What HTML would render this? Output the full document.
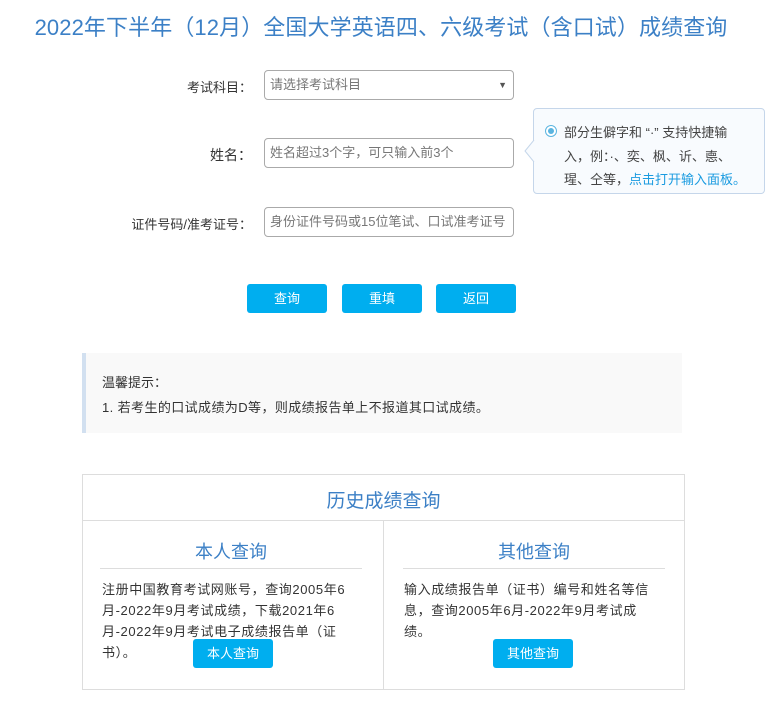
<!DOCTYPE html>
<html><head><meta charset="utf-8"><style>
body{margin:0;width:778px;height:708px;background:#fff;font-family:"Liberation Sans","Noto Sans CJK SC",sans-serif;color:#333;position:relative;overflow:hidden}
.a{position:absolute}
.t{left:0;width:762px;top:10px;text-align:center;font-size:22px;color:#3c80c6;white-space:nowrap;letter-spacing:0.1px}
.lab{width:160px;left:92px;text-align:right;font-size:13px;color:#333}
.inp{left:264px;height:28px;border:1px solid #aaa;border-radius:4px;font-size:13px;color:#777;line-height:28px;padding-left:5px;box-sizing:border-box;width:250px;height:30px;white-space:nowrap;overflow:hidden}
.btn{background:#00aeef;color:#fff;font-size:13px;text-align:center;border-radius:3px;line-height:29px;height:29px;width:80px}
.tip{left:533px;top:108px;width:232px;height:86px;border:1px solid #c5d6ea;border-radius:4px;background:#f8fbfe;box-sizing:border-box;font-size:13px;line-height:23.5px;color:#444;padding:12px 0 0 30px;white-space:nowrap}
.hbox{left:82px;top:474px;width:603px;height:216px;border:1px solid #ddd;box-sizing:border-box}
.sub{font-size:19px;color:#3c80c6;text-align:center}
.p{font-size:13px;line-height:21px;color:#333;white-space:nowrap}
.w{letter-spacing:0.6px}
</style></head><body>
<div class="a t">2022年下半年（12月）全国大学英语四、六级考试（含口试）成绩查询</div>
<div class="a lab" style="top:77px">考试科目：</div>
<div class="a inp" style="top:70px">请选择考试科目<span style="position:absolute;right:6px;top:0;font-size:9px;color:#555">▼</span></div>
<div class="a lab" style="top:145px;font-size:14px">姓名：</div>
<div class="a inp" style="top:138px">姓名超过3个字，可只输入前3个</div>
<div class="a lab" style="top:214px">证件号码/准考证号：</div>
<div class="a inp" style="top:207px">身份证件号码或15位笔试、口试准考证号</div>
<div class="a tip">
<span class="a" style="left:11px;top:16px;width:10px;height:10px;border:1px solid #5ab4e0;border-radius:50%;background:#fff"></span><span class="a" style="left:14px;top:19px;width:6px;height:6px;border-radius:50%;background:#5ab4e0"></span>
部分生僻字和 “·” 支持快捷输<br>入，例：·、奕、枫、䜣、㥁、<br>瑆、仝等，<span style="color:#1a9be0">点击打开输入面板。</span></div>
<svg class="a" style="left:524px;top:140px" width="11" height="22"><path d="M10 0 L1 11 L10 22" fill="#f8fbfe" stroke="#c5d6ea"/></svg>
<div class="a btn" style="left:247px;top:284px">查询</div>
<div class="a btn" style="left:342px;top:284px">重填</div>
<div class="a btn" style="left:436px;top:284px">返回</div>
<div class="a" style="left:82px;top:353px;width:600px;height:80px;background:#f9f9f9;border-left:4px solid #d2e0f0;box-sizing:border-box"></div>
<div class="a p" style="left:102px;top:372px;font-size:13px">温馨提示：</div>
<div class="a p w" style="left:102px;top:397px;letter-spacing:0.4px">1. 若考生的口试成绩为D等，则成绩报告单上不报道其口试成绩。</div>
<div class="a hbox"></div>
<div class="a" style="left:82px;top:520px;width:603px;height:1px;background:#ddd"></div>
<div class="a" style="left:383px;top:521px;width:1px;height:169px;background:#ddd"></div>
<div class="a sub" style="left:82px;width:603px;top:486px">历史成绩查询</div>
<div class="a sub" style="left:100px;width:262px;top:538px;font-size:18px">本人查询</div>
<div class="a" style="left:100px;width:262px;top:568px;height:1px;background:#ddd"></div>
<div class="a sub" style="left:403px;width:262px;top:538px;font-size:18px">其他查询</div>
<div class="a" style="left:403px;width:262px;top:568px;height:1px;background:#ddd"></div>
<div class="a p w" style="left:102px;top:579px">注册中国教育考试网账号，查询2005年6<br>月-2022年9月考试成绩，下载2021年6<br>月-2022年9月考试电子成绩报告单（证<br>书）。</div>
<div class="a p w" style="left:404px;top:579px">输入成绩报告单（证书）编号和姓名等信<br>息，查询2005年6月-2022年9月考试成<br>绩。</div>
<div class="a btn" style="left:193px;top:639px">本人查询</div>
<div class="a btn" style="left:493px;top:639px">其他查询</div>
</body></html>
